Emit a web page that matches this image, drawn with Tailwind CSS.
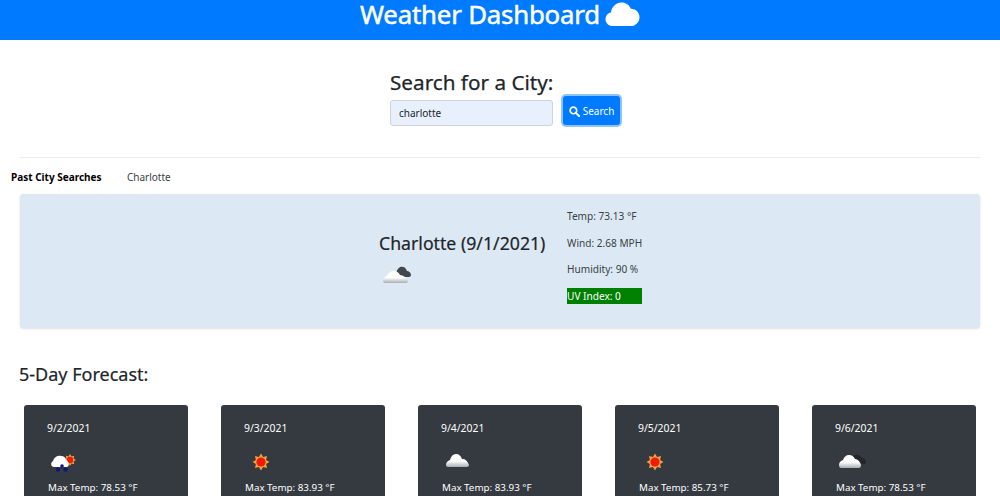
<!DOCTYPE html>
<html lang="en">

<head>
    <meta charset="UTF-8" />
    <title>Weather Dashboard</title>
    <script src="https://cdn.jsdelivr.net/npm/@tailwindcss/browser@4"></script>
</head>

<body class="bg-white text-[#212529] font-['Noto_Sans',sans-serif] h-[496px] overflow-hidden">

    <header class="bg-[#007bff] h-10 flex items-start justify-center gap-[5px] text-white">
        <h1 class="text-[25.800px] leading-[29px] font-normal tracking-[-0.2px] [-webkit-text-stroke:0.5px_white]">Weather Dashboard</h1>
        <svg class="w-[35px] h-[26px] mt-[1px]" viewBox="0 0 35 26" fill="#fff">
            <path d="M8 25C3.500 25 .5 22 .5 18.200c0-3.400 2.300-6 5.500-6.700C6.500 6 11 1.500 16.500 1.500c4.200 0 7.800 2.500 9.300 6.200 4.800-.3 8.700 3.700 8.700 8.500 0 5-3.800 8.800-8.800 8.800z" />
        </svg>
    </header>

    <section class="pt-[30px] flex justify-center">
        <div class="w-[230px] ml-[10px]">
            <h2 class="text-[20.700px] leading-[24px] font-normal [-webkit-text-stroke:0.25px_#212529]">Search for a City:</h2>
            <div class="flex items-start gap-[10px] mt-[2px]">
                <div class="w-[163px] h-[26px] mt-[4px] bg-[#e8f0fe] border border-[#ced4da] rounded-[3px] px-2 text-[10px] leading-[24px]">charlotte</div>
                <button class="w-[57px] h-[29px] bg-[#007bff] text-white text-[10px] rounded-[3px] ring-2 ring-[#8fc3fb] flex items-center justify-center gap-[3px] pt-[1px]">
                    <svg class="w-[11px] h-[11px]" viewBox="0 0 12 12" fill="none" stroke="#fff">
                        <circle cx="4.800" cy="4.800" r="3.600" stroke-width="1.800" />
                        <path d="M7.500 7.500l3.500 3.500" stroke-width="2.200" stroke-linecap="round" />
                    </svg>
                    Search
                </button>
            </div>
        </div>
    </section>

    <hr class="mx-5 mt-[31px] border-[#e9ebed]" />

    <section class="flex items-center h-9 pl-[11px] text-[10px] pt-[2px]">
        <span class="font-bold w-[116px] text-black">Past City Searches</span>
        <span class="text-[#3a3f44]">Charlotte</span>
    </section>

    <section class="mx-5 h-[134px] bg-[#dce9f5] border border-[#dfe6ed] rounded-[3px] shadow-sm flex">
        <div class="w-[546px] pl-[358px] pt-[36px]">
            <h2 class="text-[17.700px] leading-[24px] whitespace-nowrap [-webkit-text-stroke:0.2px_#212529]">Charlotte (9/1/2021)</h2>
            <svg class="mt-[9px] ml-[2px] w-[32px] h-[20px]" viewBox="0 0 32 20">
                <defs>
                    <linearGradient id="cloudShade" x1="0" y1="0" x2="0" y2="1">
                        <stop offset="0.55" stop-color="#ffffff" />
                        <stop offset="1" stop-color="#a9adb2" />
                    </linearGradient>
                </defs>
                <path d="M15 9c1-4 4-7 7-6 2 0 3 2 4 4 2 0 4 2 4 4 0 1-1 2-2 2H17z" fill="#44484d" />
                <path d="M2 17c0-3 2-4 4-5 1-3 4-5 7-5s5 2 6 4c3 0 6 2 8 6 0 1-1 2-2 2H4c-1 0-2-1-2-2z" fill="url(#cloudShade)" />
            </svg>
        </div>
        <div class="text-[10.100px] text-[#3a3f44] pt-4 flex flex-col gap-[16.500px]">
            <p class="leading-[10px]">Temp: 73.13 °F</p>
            <p class="leading-[10px]">Wind: 2.68 MPH</p>
            <p class="leading-[10px]">Humidity: 90 %</p>
            <p class="leading-[16px] bg-[#008000] text-white w-[75px] -mt-[2.500px]">UV Index: 0</p>
        </div>
    </section>

    <h2 class="mt-[34px] ml-[19px] text-[18px] leading-6 [-webkit-text-stroke:0.2px_#212529]">5-Day Forecast:</h2>

    <section class="mt-[19px] px-6 flex justify-between text-white text-[9.800px]">
        <article class="w-[164px] h-[200px] bg-[#343a40] rounded-[3px] pl-6 pt-4">
            <p class="leading-[14px] -ml-px text-[10.400px]">9/2/2021</p>
            <svg class="mt-[15px] -ml-px w-[32px] h-[24px]" viewBox="0 0 32 24">
                <g transform="translate(23 10) scale(.7)">
                    <polygon points="8.500,0 5.100,2.100 6,6 2.100,5.100 0,8.500 -2.100,5.100 -6,6 -5.100,2.100 -8.500,0 -5.100,-2.100 -6,-6 -2.100,-5.100 0,-8.500 2.100,-5.100 6,-6 5.100,-2.100" fill="#f3a13c" />
                    <circle r="4.600" fill="#f01a08" />
                </g>
                <path d="M7 17c-3 0-4-4-1-6 1-4 5-6 8-5 3 0 5 2 5 4 3 1 4 6 1 7z" fill="#fff" />
                <circle cx="11" cy="19.500" r="2.200" fill="#10167f" />
                <circle cx="15" cy="16" r="1.800" fill="#10167f" />
                <circle cx="18.500" cy="19.500" r="2.200" fill="#10167f" />
            </svg>
            <p class="mt-[7px] leading-[14px]">Max Temp: 78.53 °F</p>
        </article>
        <article class="w-[164px] h-[200px] bg-[#343a40] rounded-[3px] pl-6 pt-4">
            <p class="leading-[14px] -ml-px text-[10.400px]">9/3/2021</p>
            <svg class="mt-[15px] -ml-px w-[32px] h-[24px]" viewBox="0 0 32 24">
                <g transform="translate(17 12)">
                    <polygon points="8.500,0 5.100,2.100 6,6 2.100,5.100 0,8.500 -2.100,5.100 -6,6 -5.100,2.100 -8.500,0 -5.100,-2.100 -6,-6 -2.100,-5.100 0,-8.500 2.100,-5.100 6,-6 5.100,-2.100" fill="#f3a13c" />
                    <circle r="4.600" fill="#f01a08" />
                </g>
            </svg>
            <p class="mt-[7px] leading-[14px]">Max Temp: 83.93 °F</p>
        </article>
        <article class="w-[164px] h-[200px] bg-[#343a40] rounded-[3px] pl-6 pt-4">
            <p class="leading-[14px] -ml-px text-[10.400px]">9/4/2021</p>
            <svg class="mt-[15px] -ml-px w-[32px] h-[24px]" viewBox="0 0 32 24">
                <path d="M5 15c0-3 2-4 4-5 1-4 3-6 6-6s5 2 6 5c3 0 5 1 7 6 0 1-1 2-2 2H7c-1 0-2-1-2-2z" fill="url(#cloudShade)" />
            </svg>
            <p class="mt-[7px] leading-[14px]">Max Temp: 83.93 °F</p>
        </article>
        <article class="w-[164px] h-[200px] bg-[#343a40] rounded-[3px] pl-6 pt-4">
            <p class="leading-[14px] -ml-px text-[10.400px]">9/5/2021</p>
            <svg class="mt-[15px] -ml-px w-[32px] h-[24px]" viewBox="0 0 32 24">
                <g transform="translate(17 12)">
                    <polygon points="8.500,0 5.100,2.100 6,6 2.100,5.100 0,8.500 -2.100,5.100 -6,6 -5.100,2.100 -8.500,0 -5.100,-2.100 -6,-6 -2.100,-5.100 0,-8.500 2.100,-5.100 6,-6 5.100,-2.100" fill="#f3a13c" />
                    <circle r="4.600" fill="#f01a08" />
                </g>
            </svg>
            <p class="mt-[7px] leading-[14px]">Max Temp: 85.73 °F</p>
        </article>
        <article class="w-[164px] h-[200px] bg-[#343a40] rounded-[3px] pl-6 pt-4">
            <p class="leading-[14px] -ml-px text-[10.400px]">9/6/2021</p>
            <svg class="mt-[15px] -ml-px w-[32px] h-[24px]" viewBox="0 0 32 24">
                <path d="M17 9c1-3 3-5 6-4 2 0 3 2 4 3 2 0 4 2 4 4 0 1-1 2-2 2H19z" fill="#23262a" />
                <path d="M4 15c0-3 2-4 4-5 1-3 3-5 6-5s5 2 6 4c2 0 5 2 6 6 0 2-1 3-2 3H6c-1 0-2-1-2-3z" fill="url(#cloudShade)" />
            </svg>
            <p class="mt-[7px] leading-[14px]">Max Temp: 78.53 °F</p>
        </article>
    </section>

</body>

</html>
